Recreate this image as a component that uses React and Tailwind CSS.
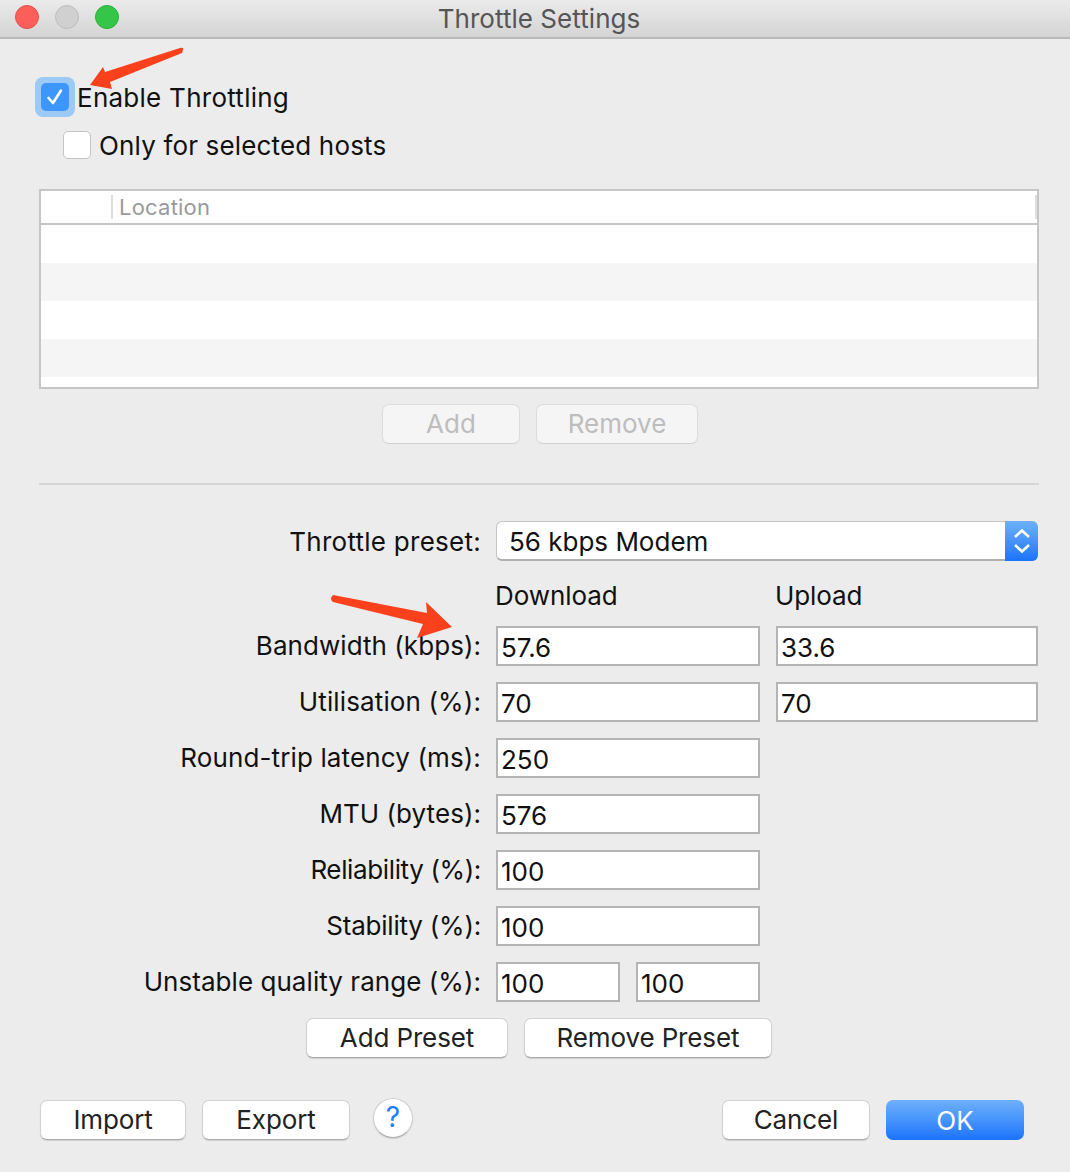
import React from "react";

const font = { fontFamily: '"Inter", "Liberation Sans", sans-serif' };

function Btn({ children, className = "" }) {
  return (
    <div className={"h-10 pb-px flex items-center justify-center rounded-[7px] bg-white border border-[#d2d2d2] border-b-[#a9a9a9] shadow-[0_1px_1px_rgba(0,0,0,0.12)] text-[26px] text-[#222] tracking-[-0.005em] " + className}>
      {children}
    </div>
  );
}

function DisabledBtn({ children, className = "" }) {
  return (
    <div className={"h-10 pb-px flex items-center justify-center rounded-[7px] bg-[#f5f5f5] border border-[#dcdcdc] border-b-[#d0d0d0] text-[26px] text-[#bdbdbd] tracking-normal " + className}>
      {children}
    </div>
  );
}

function Field({ value, className = "" }) {
  return (
    <div className={"h-10 bg-white border-2 border-[#b4b4b4] flex items-center pl-[3px] pt-0.5 text-[26px] text-[#111] tracking-normal " + className}>
      {value}
    </div>
  );
}

function Row({ label, tracking = "tracking-[0.002em]", children }) {
  return (
    <div className="flex h-10 items-center">
      <div className={"w-[442px] text-right text-[26px] text-[#111] pb-0.5 shrink-0 " + tracking}>{label}</div>
      <div className="ml-[15px] flex gap-4">{children}</div>
    </div>
  );
}

export default function App() {
  return (
    <div className="relative w-[1070px] h-[1172px] bg-[#ececec] overflow-hidden tracking-[0.01em]" style={font}>
      {/* title bar */}
      <div className="relative h-[39px] flex items-center justify-center bg-gradient-to-b from-[#ebebeb] to-[#d4d4d4] border-b-2 border-[#b9b9b9]">
        <div className="absolute left-[15px] top-[5px] flex gap-4">
          <div className="w-6 h-6 rounded-full bg-[#fc5f5a] border border-[#e2504c]" />
          <div className="w-6 h-6 rounded-full bg-[#d0d0d0] border border-[#bdbdbd]" />
          <div className="w-6 h-6 rounded-full bg-[#35c649] border border-[#2aae3b]" />
        </div>
        <span className="ml-2 pb-px text-[26px] text-[#555] tracking-[0.002em]">Throttle Settings</span>
      </div>

      <div className="pl-[39px] pr-[31px]">
        {/* Enable */}
        <div className="mt-[38px] -ml-1 flex items-center h-10">
          <div className="w-10 h-10 rounded-[8px] bg-[#9dc9f6] flex items-center justify-center shrink-0">
            <div className="w-7 h-7 rounded-[5px] bg-[#3d96fc] flex items-center justify-center">
              <svg width="20" height="20" viewBox="0 0 20 20" fill="none" stroke="white" strokeWidth="2.6" strokeLinecap="round" strokeLinejoin="round">
                <path d="M3.5 11 L8 16 L16 3.5" />
              </svg>
            </div>
          </div>
          <span className="ml-0.5 text-[26px] text-[#111] tracking-[0.01em]">Enable Throttling</span>
        </div>
        <div className="mt-[14px] ml-6 flex items-center h-7">
          <div className="w-7 h-7 rounded-[5px] bg-white border border-[#c4c4c4] shrink-0" />
          <span className="ml-2 text-[26px] text-[#111]">Only for selected hosts</span>
        </div>

        {/* table */}
        <div className="mt-[30px] w-[1000px] h-[200px] border-2 border-[#c6c6c6] bg-white overflow-hidden">
          <div className="h-[34px] flex items-center border-b-2 border-[#c6c6c6] relative">
            <div className="ml-[70px] w-0.5 h-[24px] bg-[#dedede]" />
            <span className="ml-[6px] text-[22px] text-[#9a9a9a] tracking-[0.01em]">Location</span>
            <div className="absolute right-0 top-1 w-0.5 h-[24px] bg-[#dedede]" />
          </div>
          <div className="h-[38px] bg-white" />
          <div className="h-[38px] bg-[#f5f5f5]" />
          <div className="h-[38px] bg-white" />
          <div className="h-[38px] bg-[#f5f5f5]" />
        </div>

        <div className="mt-[15px] w-[1000px] flex justify-center gap-4 pl-0.5">
          <DisabledBtn className="w-[138px]">Add</DisabledBtn>
          <DisabledBtn className="w-[162px]">Remove</DisabledBtn>
        </div>

        <div className="mt-[39px] w-[1000px] h-0.5 bg-[#d6d6d6]" />

        {/* form */}
        <div className="mt-[36px]">
          <div className="flex h-10 items-center">
            <div className="w-[442px] text-right text-[26px] text-[#111] shrink-0 tracking-[0.01em]">Throttle preset:</div>
            <div className="ml-[15px] w-[542px] h-10 rounded-[6px] bg-white border border-r-0 border-[#c4c4c4] border-b-2 border-b-[#b0b0b0] relative">
              <span className="pl-3 text-[26px] text-[#111] leading-[40px] tracking-normal">56 kbps Modem</span>
              <div className="absolute right-0 -top-px -bottom-0.5 w-[33px] rounded-r-[6px] bg-gradient-to-b from-[#6db0fb] to-[#1a73fb] flex items-center justify-center">
                <svg width="18" height="28" viewBox="0 0 18 28" fill="none" stroke="white" strokeWidth="2.6">
                  <path d="M2 10 L9 3.5 L16 10" />
                  <path d="M2 18 L9 24.5 L16 18" />
                </svg>
              </div>
            </div>
          </div>

          <div className="mt-[19px] ml-[456px] flex h-[30px] items-center text-[26px] text-[#111] tracking-[-0.003em]">
            <span className="w-[280px]">Download</span>
            <span>Upload</span>
          </div>

          <div className="mt-4 flex flex-col gap-4">
            <Row label="Bandwidth (kbps):">
              <Field value="57.6" className="w-[264px]" />
              <Field value="33.6" className="w-[262px]" />
            </Row>
            <Row label="Utilisation (%):" tracking="tracking-[0.005em]">
              <Field value="70" className="w-[264px]" />
              <Field value="70" className="w-[262px]" />
            </Row>
            <Row label="Round-trip latency (ms):" tracking="tracking-[0.005em]">
              <Field value="250" className="w-[264px]" />
            </Row>
            <Row label="MTU (bytes):">
              <Field value="576" className="w-[264px]" />
            </Row>
            <Row label="Reliability (%):" tracking="tracking-[-0.014em]">
              <Field value="100" className="w-[264px]" />
            </Row>
            <Row label="Stability (%):" tracking="tracking-[-0.008em]">
              <Field value="100" className="w-[264px]" />
            </Row>
            <Row label="Unstable quality range (%):">
              <Field value="100" className="w-[124px]" />
              <Field value="100" className="w-[124px]" />
            </Row>
          </div>

          <div className="mt-4 ml-[267px] flex gap-4">
            <Btn className="w-[202px]">Add Preset</Btn>
            <Btn className="w-[248px]">Remove Preset</Btn>
          </div>
        </div>

        {/* footer */}
        <div className="mt-[40px] ml-px mr-[15px] flex items-start">
          <div className="mt-0.5 flex gap-4">
            <Btn className="w-[146px]">Import</Btn>
            <Btn className="w-[148px]">Export</Btn>
          </div>
          <div className="ml-[23px] w-10 h-10 rounded-full bg-white border border-[#cfcfcf] border-b-[#b0b0b0] shadow-[0_1px_1px_rgba(0,0,0,0.12)] flex items-center justify-center text-[28px] text-[#1f7ffb] pb-0.5">?</div>
          <div className="mt-0.5 ml-auto flex gap-4">
            <Btn className="w-[148px]">Cancel</Btn>
            <div className="w-[138px] h-10 rounded-[7px] bg-gradient-to-b from-[#6db0fb] to-[#1a73fb] flex items-center justify-center text-[26px] text-white tracking-normal">OK</div>
          </div>
        </div>
      </div>

      {/* annotation arrows */}
      <svg className="absolute left-0 top-0 pointer-events-none" width="1070" height="1172" viewBox="0 0 1070 1172">
        <path d="M183 50 Q184 47 180 48 L105 72 L103 67 L90 85 L112 89 L110 82 L182 53 Z" fill="#fb411c" />
        <path d="M333 595 Q329 599 333 602 L423 624 L417 638 L452 627 L426 602 L427 613 Z" fill="#fb411c" />
      </svg>
    </div>
  );
}
